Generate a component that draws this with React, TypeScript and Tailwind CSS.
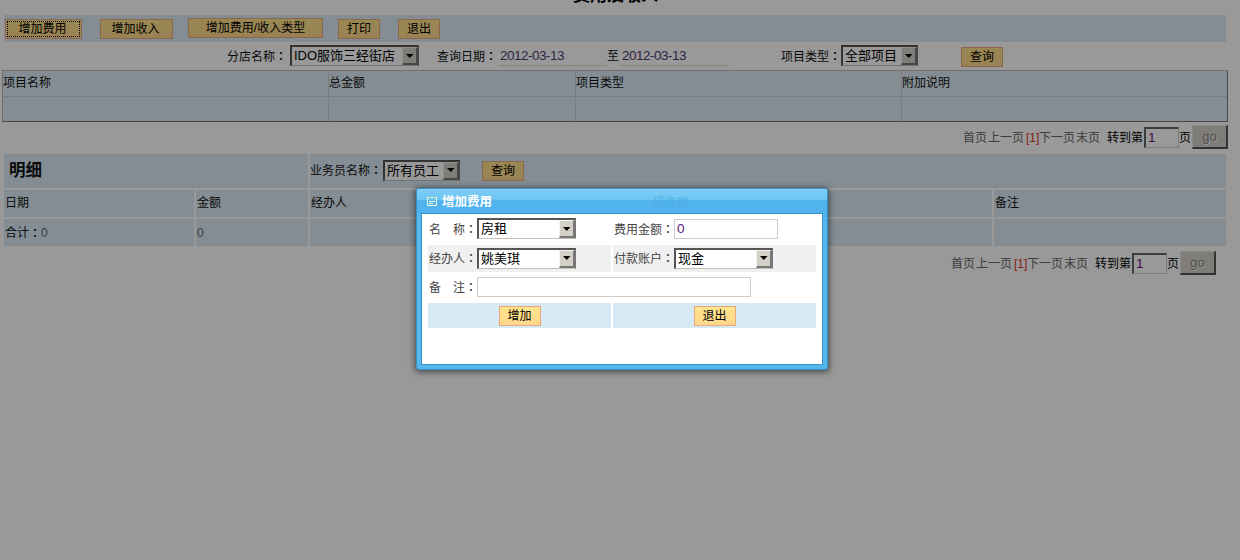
import React from "react";

function Colon() {
  return <span className="inline-block w-3 text-center font-['Noto_Sans_CJK_TC',sans-serif] font-medium">：</span>;
}

function Btn({ className, children, focused }: { className: string; children: React.ReactNode; focused?: boolean }) {
  return (
    <button
      className={`relative h-5 shrink-0 border border-[#e9a97c] bg-linear-to-b from-[#ffe48a] to-[#ffd78c] text-[12px] leading-[18px] text-black ${className}`}
    >
      {children}
      {focused && <span className="absolute inset-px border border-dotted border-black" />}
    </button>
  );
}

function Select({ className, children }: { className: string; children: React.ReactNode }) {
  return (
    <div
      className={`flex h-[21px] shrink-0 border-t-2 border-r border-b border-l-2 border-t-[#555] border-l-[#555] border-r-[#777] border-b-[#c4c0b8] bg-white text-[13px] leading-[18px] text-black ${className}`}
    >
      <span className="flex-1 overflow-hidden pl-[2px] whitespace-nowrap">{children}</span>
      <span className="flex w-4 items-center justify-center border-t border-r-2 border-b-2 border-l border-t-[#f4f2ee] border-l-[#f4f2ee] border-r-[#777] border-b-[#777] bg-[#d4d0c8]">
        <svg width="8" height="4" viewBox="0 0 8 4">
          <path d="M0 0h7.5L3.75 4z" fill="#000" />
        </svg>
      </span>
    </div>
  );
}

function Pager({ className }: { className: string }) {
  return (
    <div className={`flex h-6 items-center justify-end text-[12px] ${className}`}>
      <span className="w-[25px] pt-0.5 text-[#666]">首页</span>
      <span className="w-[38px] pt-0.5 text-[#666]">上一页</span>
      <span className="w-[13px] pt-0.5 text-center text-[#e33424]">[1]</span>
      <span className="w-[37px] pt-0.5 text-[#666]">下一页</span>
      <span className="w-[31px] pt-0.5 text-[#666]">末页</span>
      <span className="w-[37px] pt-0.5 text-black">转到第</span>
      <span className="h-[21px] w-[35px] border-t-2 border-r border-b border-l-2 border-t-[#666] border-l-[#666] border-r-[#d4d0c8] border-b-[#d4d0c8] bg-white pl-0.5 text-[13.5px] leading-[18px] text-[#6b1580]">1</span>
      <span className="w-[13px] pt-0.5 text-black">页</span>
      <span className="h-6 w-9 border-t border-r-2 border-b-2 border-l border-t-[#e8e6e0] border-l-[#e8e6e0] border-r-[#555] border-b-[#555] bg-[#d4d0c8] text-center text-[13px] leading-[22px] text-[#85827c] [text-shadow:1px_1px_0_#fff]">go</span>
    </div>
  );
}

const cell = "bg-[#dcebf7] pl-px flex items-center";
const headCell = "bg-[#dcebf7] pb-0.5 pl-px flex items-center";
const dateField =
  "h-[19px] w-[109px] border-b border-[#dcdfc4] pl-0.5 text-[13.5px] leading-[18px] tracking-[-0.5px] text-[#53396f]";

export default function App() {
  return (
    <div className="relative h-[560px] w-[1240px] overflow-hidden bg-white font-['Liberation_Sans','Noto_Sans_CJK_SC',sans-serif] text-[12px] text-[#111]">
      <div className="flex h-[15px] items-end overflow-hidden pl-[573px]">
        <h1 className="-translate-y-[9px] text-[17px] leading-5 font-bold whitespace-nowrap text-black">费用及收入</h1>
      </div>
      <div className="mr-[14px] ml-1 flex h-[27px] items-center bg-[#dcebf7] pl-px">
        <Btn className="mr-[18px] w-[77px] pr-[2px]" focused>增加费用</Btn>
        <Btn className="mr-[15px] w-[73px] pr-[2px]">增加收入</Btn>
        <Btn className="mr-[15px] w-[135px] -translate-y-px">增加费用/收入类型</Btn>
        <Btn className="mr-[18px] w-[42px]">打印</Btn>
        <Btn className="w-[42px]">退出</Btn>
      </div>
      <div className="flex h-[28px] items-center pl-[227px]">
        <span className="w-[63px]">分店名称<Colon /></span>
        <Select className="mb-px w-[129px]">IDO服饰三经街店</Select>
        <span className="ml-[18px] w-[61px]">查询日期<Colon /></span>
        <span className={dateField}>2012-03-13</span>
        <span className="w-[13px]">至</span>
        <span className={dateField}>2012-03-13</span>
        <span className="ml-[52px] w-[60px]">项目类型<Colon /></span>
        <Select className="mb-px w-[77px]">全部项目</Select>
        <Btn className="mt-0.5 ml-[43px] w-[42px]">查询</Btn>
      </div>
      <div className="ml-[2px] grid h-[52px] w-[1226px] grid-cols-[326px_247px_326px_1fr] grid-rows-[26px_1fr] border-t border-r border-b border-l border-t-[#bbb] border-l-[#bbb] border-r-[#777] border-b-[#777] bg-[#dcebf7]">
        {["项目名称", "总金额", "项目类型", "附加说明", "", "", "", ""].map((t, i) => (
          <div key={i} className={`${i % 4 < 3 ? "border-r" : ""} ${i < 4 ? "border-b" : ""} flex items-center border-[#cbcfd1] pb-0.5`}>
            {t}
          </div>
        ))}
      </div>
      <Pager className="mt-[3px] mr-3" />
      <div className="mt-[5px] ml-1 flex w-[1222px] flex-col gap-0.5">
        <div className="grid h-[34px] grid-cols-[304px_916px] gap-0.5">
          <div className="flex items-center bg-[#dcebf7] pb-px pl-[5px] text-[16.5px] font-bold">明细</div>
          <div className="flex items-center bg-[#dcebf7]">
            <span className="w-[73px] pb-px whitespace-nowrap">业务员名称<Colon /></span>
            <Select className="mb-0.5 w-[77px]">所有员工</Select>
            <Btn className="ml-[22px] w-[42px]">查询</Btn>
          </div>
        </div>
        <div className="grid grid-cols-[190px_112px_340px_340px_232px] grid-rows-[27px_27px] gap-0.5">
          {["日期", "金额", "经办人", "操作员", "备注"].map((t) => (
            <div key={t} className={headCell}>{t}</div>
          ))}
          <div className={cell}>合计<Colon /><span className="text-[#666]">0</span></div>
          <div className={cell}><span className="text-[#666]">0</span></div>
          <div className={cell} />
          <div className={cell} />
          <div className={cell} />
        </div>
      </div>
      <Pager className="mt-[5px] mr-6" />

      <div className="absolute inset-0 bg-black/40" />

      <div className="absolute top-[188px] left-[416px] flex h-[182px] w-[412px] flex-col rounded-[3px] border border-[#3590c4] bg-[#56b6ee] px-[4px] pb-[4px] shadow-[0_1px_6px_1px_rgba(0,0,0,0.55)]">
        <div className="-mx-[4px] flex h-6 shrink-0 items-center rounded-t-[2px] border-t border-[#8fd4f8] bg-linear-to-b from-[#7accf6] from-0% via-[#6dc5f2] via-44% to-[#50b3ed] to-46% pt-px pl-[10px] text-[12.5px] font-bold text-white">
          <svg width="10" height="9" viewBox="0 0 10 9" className="mr-[5px] mb-px">
            <path d="M.5.5h9v8h-9zM2 4.5h6M2 6.5h4" fill="none" stroke="#f2fbe8" />
            <path d="M0 .5h10" stroke="#d5efb4" />
          </svg>
          <span className="w-[211px]">增加费用</span>
          <span className="pt-0.5 text-[12px] font-normal text-[#4eb0e7]">操作员</span>
        </div>
        <div className="flex-1 border border-[#3590c4] bg-white pt-[3px] pl-[6px] text-[#444]">
          <div className="grid w-[388px] grid-cols-[183px_203px] grid-rows-[26px_27px_27px_25px] gap-0.5">
            <div className="flex items-center pb-[3px]">
              <span className="w-[49px] pt-0.5 pl-px">名&#12288;称<Colon /></span>
              <Select className="w-[99px]">房租</Select>
            </div>
            <div className="flex items-center pb-0.5">
              <span className="w-[61px] pt-px pl-px">费用金额<Colon /></span>
              <span className="h-5 w-[104px] border border-[#ccc] bg-white pl-0.5 text-[13.5px] leading-[18px] text-[#5b1677]">0</span>
            </div>
            <div className="flex items-center bg-[#f0f0f0]">
              <span className="w-[49px] pl-px">经办人<Colon /></span>
              <Select className="mb-px w-[99px]">姚美琪</Select>
            </div>
            <div className="flex items-center bg-[#f0f0f0]">
              <span className="w-[61px] pl-px">付款账户<Colon /></span>
              <Select className="mb-px w-[99px]">现金</Select>
            </div>
            <div className="col-span-2 flex items-center pb-0.5">
              <span className="w-[49px] pt-px pl-px">备&#12288;注<Colon /></span>
              <span className="h-5 w-[274px] border border-[#ccc] bg-white" />
            </div>
            <div className="flex items-center justify-center bg-[#d8e9f6]">
              <Btn className="w-[42px]">增加</Btn>
            </div>
            <div className="flex items-center justify-center bg-[#d8e9f6]">
              <Btn className="w-[42px]">退出</Btn>
            </div>
          </div>
        </div>
      </div>
    </div>
  );
}
